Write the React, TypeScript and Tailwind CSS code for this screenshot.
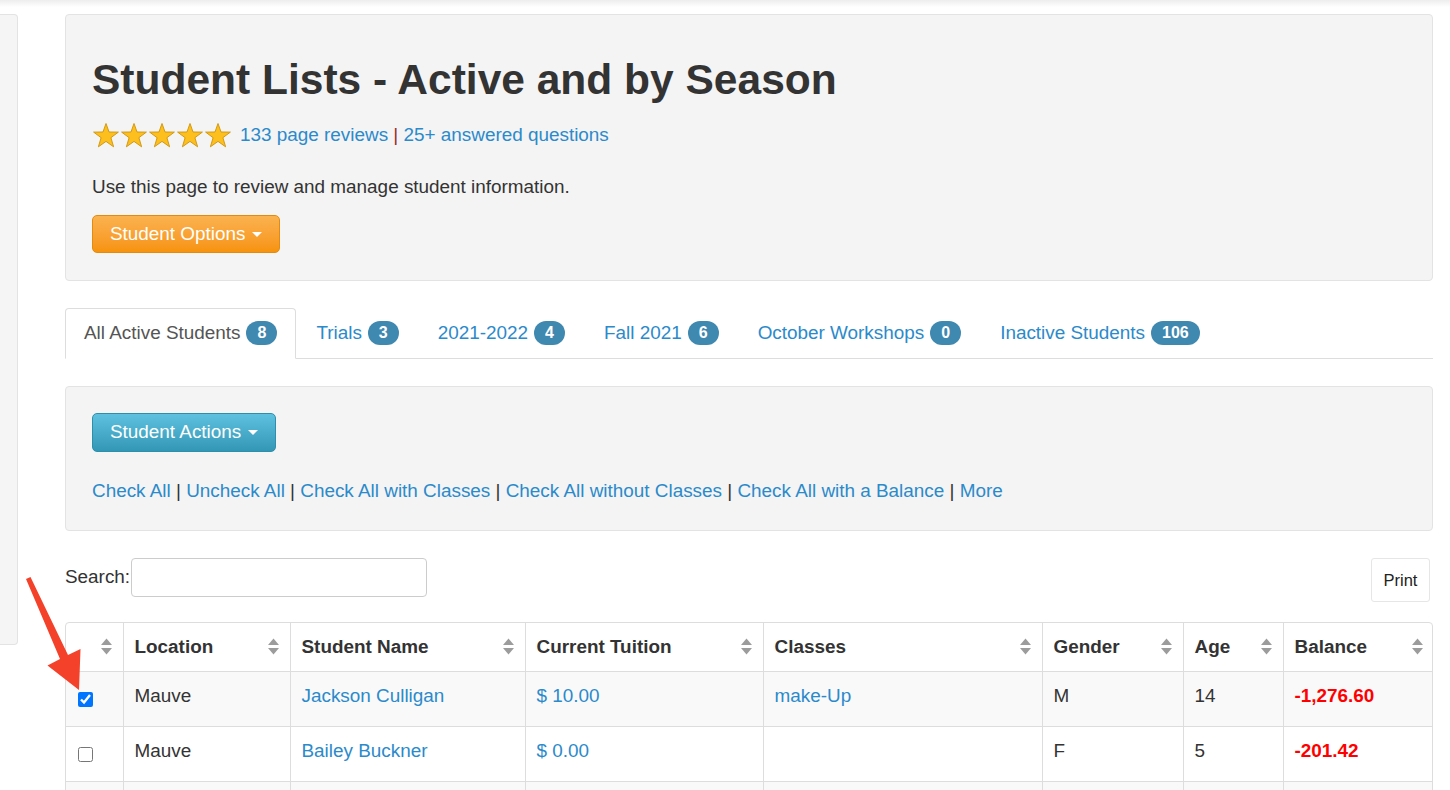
import React from "react";

const cols = [57, 167, 235, 238, 279, 141, 100, 151];

function Star() {
  return (
    <svg width="28" height="27" viewBox="0 0 28 27">
      <polygon
        points="14,1.5 17,10 26.4,10.1 18.9,15.7 21.6,24.8 14,19.4 6.4,24.8 9.1,15.7 1.6,10.1 11,10"
        fill="#fcbf1e"
        stroke="#d39a12"
        strokeWidth="1"
        strokeLinejoin="round"
      />
    </svg>
  );
}

function Caret() {
  return <span className="ml-[7px] inline-block w-0 h-0 border-l-[5px] border-r-[5px] border-t-[5px] border-l-transparent border-r-transparent border-t-white align-middle" />;
}

function SortIcon() {
  return (
    <svg width="11" height="17" viewBox="0 0 11 17" className="shrink-0">
      <polygon points="0,7 5.5,0.5 11,7" fill="#9c9c9c" />
      <polygon points="0,10 11,10 5.5,16.5" fill="#9c9c9c" />
    </svg>
  );
}

function Badge({ n }: { n: string }) {
  return (
    <span className="ml-[6px] inline-flex items-center justify-center h-[24px] px-[11px] rounded-full bg-[#3f88b0] text-white text-[16px] font-bold leading-none">
      {n}
    </span>
  );
}

const tabs = [
  { label: "Trials", n: "3" },
  { label: "2021-2022", n: "4" },
  { label: "Fall 2021", n: "6" },
  { label: "October Workshops", n: "0" },
  { label: "Inactive Students", n: "106" },
];

const checkLinks = ["Check All", "Uncheck All", "Check All with Classes", "Check All without Classes", "Check All with a Balance", "More"];

const headers = ["", "Location", "Student Name", "Current Tuition", "Classes", "Gender", "Age", "Balance"];

type Row = {
  checked: boolean;
  location: string;
  name: string;
  tuition: string;
  classes: string;
  gender: string;
  age: string;
  balance: string;
};

const rows: Row[] = [
  { checked: true, location: "Mauve", name: "Jackson Culligan", tuition: "$ 10.00", classes: "make-Up", gender: "M", age: "14", balance: "-1,276.60" },
  { checked: false, location: "Mauve", name: "Bailey Buckner", tuition: "$ 0.00", classes: "", gender: "F", age: "5", balance: "-201.42" },
];

export default function App() {
  return (
    <div className="relative h-[790px] w-[1450px] overflow-hidden bg-white text-[18.9px] text-[#333] font-['Liberation_Sans',Arial,sans-serif]">
      <div className="h-[14px] bg-linear-to-b from-[#ededed] via-white to-white" />
      <div className="flex">
        <div className="w-[18px] h-[631px] bg-[#f5f5f5] border border-l-0 border-[#e3e3e3] rounded-r-[4px]" />
        <main className="ml-[47px] w-[1368px]">
          {/* header well */}
          <section className="bg-[#f4f4f4] border border-[#e3e3e3] rounded-[4px] px-[26px] pt-[42px] pb-[27px]">
            <h1 className="text-[42.5px] leading-[46px] font-bold text-[#333]">Student Lists - Active and by Season</h1>
            <div className="mt-[19px] flex items-center h-[26px]">
              <div className="flex">
                <Star />
                <Star />
                <Star />
                <Star />
                <Star />
              </div>
              <span className="ml-[8px] leading-[26px]">
                <a className="text-[#2b8acb]">133 page reviews</a>
                <span className="text-[#96302c]"> | </span>
                <a className="text-[#2b8acb]">25+ answered questions</a>
              </span>
            </div>
            <p className="mt-[26px] leading-[26px]">Use this page to review and manage student information.</p>
            <button className="mt-[15px] h-[38px] px-[17px] flex items-center rounded-[5px] border border-[#e28c0f] bg-linear-to-b from-[#fbb24e] to-[#f79308] text-white leading-none">
              Student Options
              <Caret />
            </button>
          </section>

          {/* tabs */}
          <ul className="mt-[27px] flex border-b border-[#ddd]">
            <li className="-mb-px mr-[1px] pt-[11px] pb-[12px] px-[18px] bg-white border border-[#ddd] border-b-white rounded-t-[4px] flex items-center leading-[26px] text-[#555]">
              All Active Students
              <Badge n="8" />
            </li>
            {tabs.map((t) => (
              <li key={t.label} className="-mb-px mr-[1px] pt-[11px] pb-[12px] px-[18px] border border-transparent flex items-center leading-[26px] text-[#2b8acb]">
                {t.label}
                <Badge n={t.n} />
              </li>
            ))}
          </ul>

          {/* actions well */}
          <section className="mt-[27px] bg-[#f4f4f4] border border-[#e3e3e3] rounded-[4px] px-[26px] pt-[26px] pb-[26px]">
            <button className="h-[39px] px-[17px] flex items-center rounded-[5px] border border-[#2d8fab] bg-linear-to-b from-[#5dc1df] to-[#3297b5] text-white leading-none">
              Student Actions
              <Caret />
            </button>
            <div className="mt-[26px] leading-[26px]">
              {checkLinks.map((l, i) => (
                <React.Fragment key={l}>
                  {i > 0 && <span className="text-[#333]"> | </span>}
                  <a className="text-[#2b8acb]">{l}</a>
                </React.Fragment>
              ))}
            </div>
          </section>

          {/* search + print */}
          <div className="mt-[27px] flex items-start justify-between h-[44px]">
            <label className="flex items-center h-[39px]">
              Search:
              <input type="text" className="ml-px w-[296px] h-[39px] border border-[#ccc] rounded-[4px] bg-white" />
            </label>
            <button className="mr-[3px] w-[59px] h-[44px] border border-[#e6e6e6] rounded-[3px] bg-white text-[16.5px] text-[#222]">Print</button>
          </div>

          {/* table */}
          <div className="mt-[20px] border border-[#ddd] rounded-t-[4px] overflow-hidden">
            <table className="w-full table-fixed border-collapse">
              <colgroup>
                {cols.map((w, i) => (
                  <col key={i} style={{ width: w }} />
                ))}
              </colgroup>
              <thead>
                <tr className="h-[48px]">
                  {headers.map((h, i) => (
                    <th key={i} className={`px-[11px] text-left font-bold ${i > 0 ? "border-l border-[#ddd]" : ""}`}>
                      <div className="flex items-center justify-between">
                        <span>{h}</span>
                        <SortIcon />
                      </div>
                    </th>
                  ))}
                </tr>
              </thead>
              <tbody>
                {rows.map((r, idx) => (
                  <tr key={r.name} className={`h-[55px] border-t border-[#ddd] ${idx % 2 === 0 ? "bg-[#f9f9f9]" : "bg-white"}`}>
                    <td className="px-[12px] align-top pt-[20px]">
                      <input type="checkbox" defaultChecked={r.checked} className="block w-[15px] h-[15px] m-0 accent-[#0075ff]" />
                    </td>
                    <td className="px-[11px] align-top pt-[11px] leading-[26px] border-l border-[#ddd]">{r.location}</td>
                    <td className="px-[11px] align-top pt-[11px] leading-[26px] border-l border-[#ddd] text-[#2b8acb]">{r.name}</td>
                    <td className="px-[11px] align-top pt-[11px] leading-[26px] border-l border-[#ddd] text-[#2b8acb]">{r.tuition}</td>
                    <td className="px-[11px] align-top pt-[11px] leading-[26px] border-l border-[#ddd] text-[#2b8acb]">{r.classes}</td>
                    <td className="px-[11px] align-top pt-[11px] leading-[26px] border-l border-[#ddd]">{r.gender}</td>
                    <td className="px-[11px] align-top pt-[11px] leading-[26px] border-l border-[#ddd]">{r.age}</td>
                    <td className="px-[11px] align-top pt-[11px] leading-[26px] border-l border-[#ddd] font-bold text-[#ff0000]">{r.balance}</td>
                  </tr>
                ))}
                <tr className="h-[55px] border-t border-[#ddd] bg-[#f9f9f9]">
                  {cols.map((_, i) => (
                    <td key={i} className={i > 0 ? "border-l border-[#ddd]" : ""}>&nbsp;</td>
                  ))}
                </tr>
              </tbody>
            </table>
          </div>
        </main>
      </div>

      {/* annotation arrow */}
      <svg className="absolute left-0 top-0 pointer-events-none" width="120" height="720" viewBox="0 0 120 720">
        <polygon points="26,579 30.5,577 68,655 80.5,649 79,690 47.5,665.5 60,659" fill="#f4412a" />
      </svg>
    </div>
  );
}
